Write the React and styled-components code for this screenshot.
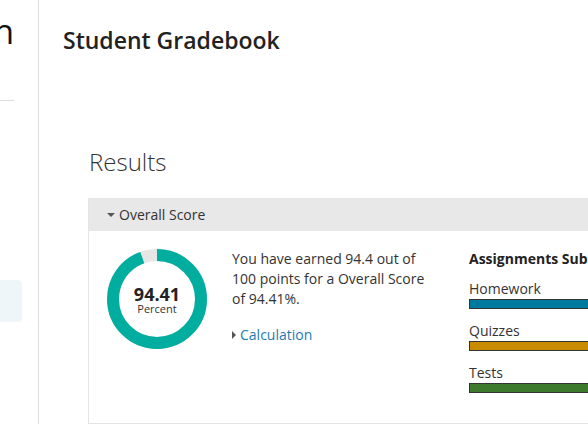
import React from "react";
import styled, { createGlobalStyle } from "styled-components";

const GlobalStyle = createGlobalStyle`
  html, body {
    margin: 0;
    padding: 0;
    background: #fff;
    font-family: "Open Sans", "Noto Sans", sans-serif;
    color: #333;
  }
`;

const Page = styled.div`
  display: flex;
  height: 424px;
  overflow: hidden;
`;

const Sidebar = styled.aside`
  flex: 0 0 38px;
  display: flex;
  justify-content: flex-end;
  border-right: 1px solid #ddd;
  overflow: hidden;
`;

const SidebarInner = styled.div`
  flex: 0 0 220px;
  display: flex;
  flex-direction: column;
`;

const SidebarHead = styled.div`
  height: 101px;
  margin-right: 24px;
  border-bottom: 1px solid #ddd;
  padding-top: 8px;
  box-sizing: border-box;
  text-align: right;
`;

const CourseName = styled.div`
  font-size: 34px;
  line-height: 46px;
  color: #111;
  white-space: nowrap;
`;

const NavItem = styled.div`
  height: 42px;
  margin-right: 16px;
  margin-top: ${(p) => p.$top || 0}px;
  border-radius: 0 4px 4px 0;
  background: ${(p) => (p.$active ? "#eef6fa" : "transparent")};
`;

const Main = styled.main`
  flex: 1;
  min-width: 0;
  padding: 24px 0 0 24px;
`;

const Title = styled.h1`
  margin: 0;
  font-size: 23px;
  line-height: 32px;
  font-weight: 600;
  color: #222;
  white-space: nowrap;
`;

const Section = styled.section`
  margin-top: 90px;
  padding-left: 25px;
`;

const SectionTitle = styled.h2`
  margin: 0 0 20px 1px;
  font-size: 24px;
  line-height: 32px;
  font-weight: 300;
  color: #333;
`;

const Panel = styled.div`
  width: 560px;
  border: 1px solid #e4e4e4;
  border-top: none;
`;

const PanelHeader = styled.div`
  display: flex;
  align-items: center;
  gap: 4px;
  height: 33px;
  padding-left: 18px;
  background: #e8e8e8;
  font-size: 14px;
  color: #333;
`;

const Caret = styled.span`
  width: 0;
  height: 0;
  ${(p) =>
    p.$open
      ? `border-left: 4px solid transparent;
         border-right: 4px solid transparent;
         border-top: 4px solid #555;`
      : `border-top: 4px solid transparent;
         border-bottom: 4px solid transparent;
         border-left: 4px solid #555;`}
`;

const PanelBody = styled.div`
  display: flex;
  gap: 25px;
  padding: 18px 18px 0 18px;
  height: 192px;
  box-sizing: border-box;
`;

const Donut = styled.div`
  position: relative;
  flex: 0 0 100px;
  height: 100px;
`;

const DonutLabel = styled.div`
  position: absolute;
  inset: 0;
  display: flex;
  flex-direction: column;
  align-items: center;
  justify-content: center;
  padding-top: 1px;
`;

const Score = styled.div`
  font-size: 18px;
  line-height: 20px;
  font-weight: 700;
  color: #222;
`;

const Unit = styled.div`
  font-size: 11px;
  line-height: 12px;
  margin-top: -1px;
  color: #333;
`;

const Summary = styled.div`
  flex: 0 0 200px;
  font-size: 14px;
  line-height: 20px;
  color: #333;
`;

const Para = styled.p`
  margin: 0;
`;

const Toggle = styled.div`
  display: flex;
  align-items: center;
  gap: 4px;
  margin-top: 16px;
  color: #1f7ab0;
`;

const Breakdown = styled.div`
  flex: 0 0 260px;
  margin-left: 12px;
  font-size: 14px;
  line-height: 20px;
`;

const BreakdownTitle = styled.div`
  font-weight: 700;
  color: #222;
  white-space: nowrap;
`;

const Category = styled.div`
  margin-top: ${(p) => (p.$first ? 10 : 12)}px;
`;

const CategoryName = styled.div`
  color: #333;
  line-height: 20px;
`;

const Bar = styled.div`
  height: 8px;
  border: 1px solid #333;
  background: ${(p) => p.$color};
`;

const R = 44;
const C = 2 * Math.PI * R;

function ScoreDonut({ value }) {
  const filled = (value / 100) * C;
  return (
    <Donut>
      <svg width="100" height="100" viewBox="0 0 100 100">
        <circle cx="50" cy="50" r={R} fill="none" stroke="#e6e6e6" strokeWidth="12" />
        <circle
          cx="50"
          cy="50"
          r={R}
          fill="none"
          stroke="#00ad9f"
          strokeWidth="12"
          strokeDasharray={`${filled} ${C}`}
          transform="rotate(-90 50 50)"
        />
      </svg>
      <DonutLabel>
        <Score>{value}</Score>
        <Unit>Percent</Unit>
      </DonutLabel>
    </Donut>
  );
}

const categories = [
  { name: "Homework", color: "#00799e" },
  { name: "Quizzes", color: "#c98b00" },
  { name: "Tests", color: "#3e7a2e" },
];

export default function App() {
  return (
    <>
      <GlobalStyle />
      <Page>
        <Sidebar>
          <SidebarInner>
            <SidebarHead>
              <CourseName>Math</CourseName>
            </SidebarHead>
            <NavItem $top={179} $active />
          </SidebarInner>
        </Sidebar>
        <Main>
          <Title>Student Gradebook</Title>
          <Section>
            <SectionTitle>Results</SectionTitle>
            <Panel>
              <PanelHeader>
                <Caret $open />
                Overall Score
              </PanelHeader>
              <PanelBody>
                <ScoreDonut value={94.41} />
                <Summary>
                  <Para>
                    You have earned 94.4 out of 100 points for a Overall Score of 94.41%.
                  </Para>
                  <Toggle>
                    <Caret />
                    Calculation
                  </Toggle>
                </Summary>
                <Breakdown>
                  <BreakdownTitle>Assignments Submitted</BreakdownTitle>
                  {categories.map((c, i) => (
                    <Category key={c.name} $first={i === 0}>
                      <CategoryName>{c.name}</CategoryName>
                      <Bar $color={c.color} />
                    </Category>
                  ))}
                </Breakdown>
              </PanelBody>
            </Panel>
          </Section>
        </Main>
      </Page>
    </>
  );
}
